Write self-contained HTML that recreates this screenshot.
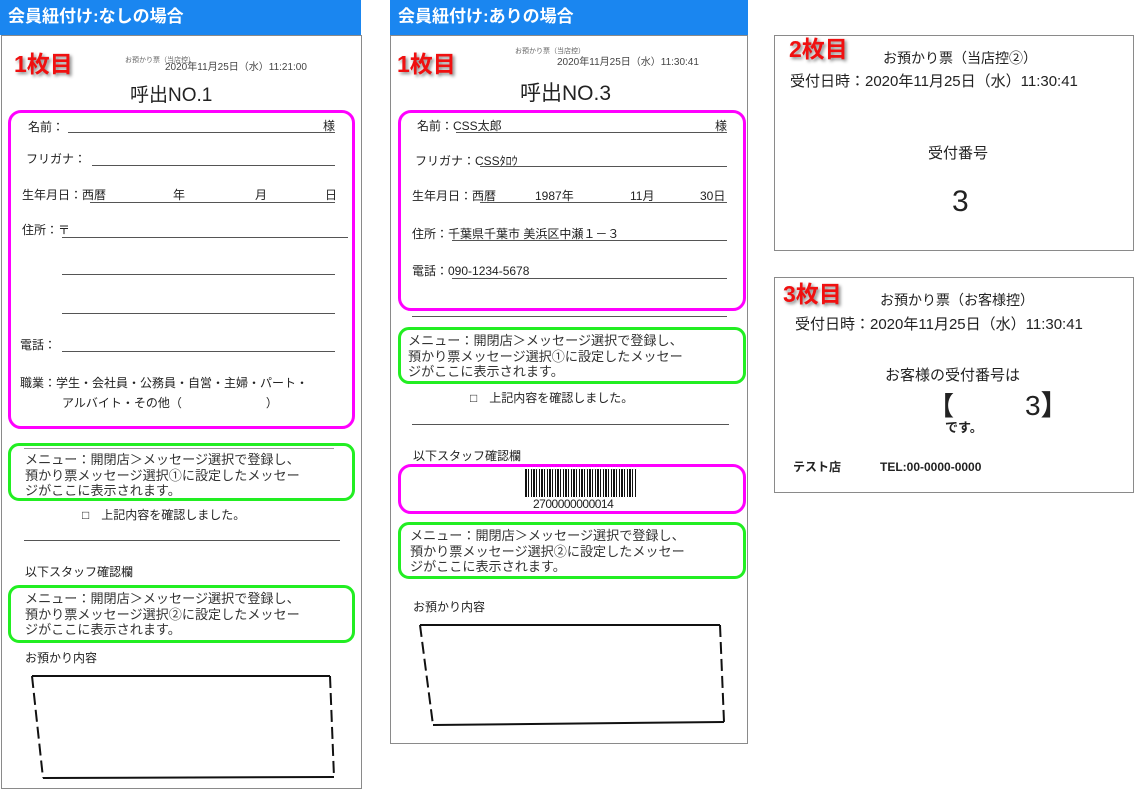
<!DOCTYPE html>
<html><head><meta charset="utf-8"><style>
*{margin:0;padding:0;box-sizing:border-box}
body{width:1134px;height:789px;background:#fff;position:relative;overflow:hidden;font-family:"Liberation Sans","Noto Sans CJK JP",sans-serif;color:#222}
.a{position:absolute;white-space:nowrap;line-height:1}
.hd{position:absolute;top:0;height:35px;background:#1a86f0;color:#fff;font-weight:bold;font-size:17px;padding:8px 0 0 8px;line-height:1}
.pn{position:absolute;border:1px solid #8a8a8a}
.mg{position:absolute;border:3px solid #f0f;border-radius:13px}
.gr{position:absolute;border:3px solid #22ee22;border-radius:11px}
.ln{position:absolute;height:1px;background:#555}
.red{position:absolute;color:#f01010;font-weight:bold;font-size:23px;line-height:1;text-shadow:2px 2px 3px #888,-1px -1px 0 #fff,1px -1px 0 #fff,-1px 1px 0 #fff}
.f12{font-size:12px}
.msg{position:absolute;font-size:13.1px;line-height:15.5px;white-space:nowrap;color:#333}
</style></head><body>

<!-- LEFT -->
<div class="hd" style="left:0;width:361px">会員紐付け:なしの場合</div>
<div class="pn" style="left:1px;top:35px;width:361px;height:754px"></div>
<div class="red" style="left:14px;top:53px">1枚目</div>
<div class="a" style="left:125px;top:57px;font-size:7px;color:#666">お預かり票（当店控）</div>
<div class="a" style="left:165px;top:63px;font-size:10px;color:#444">2020年11月25日（水）11:21:00</div>
<div class="a" style="left:130px;top:86px;font-size:19px">呼出NO.1</div>
<div class="mg" style="left:8px;top:110px;width:347px;height:319px"></div>
<div class="a f12" style="left:28px;top:121px">名前：</div><div class="ln" style="left:68px;top:132px;width:267px"></div><div class="a f12" style="left:323px;top:120px">様</div>
<div class="a f12" style="left:26px;top:153px">フリガナ：</div><div class="ln" style="left:92px;top:165px;width:243px"></div>
<div class="a f12" style="left:22px;top:189px">生年月日：西暦</div><div class="ln" style="left:90px;top:202px;width:245px"></div>
<div class="a f12" style="left:173px;top:189px">年</div><div class="a f12" style="left:255px;top:189px">月</div><div class="a f12" style="left:325px;top:189px">日</div>
<div class="a f12" style="left:22px;top:224px">住所：〒</div><div class="ln" style="left:62px;top:237px;width:286px"></div>
<div class="ln" style="left:62px;top:274px;width:273px"></div>
<div class="ln" style="left:62px;top:313px;width:273px"></div>
<div class="a f12" style="left:20px;top:339px">電話：</div><div class="ln" style="left:62px;top:351px;width:273px"></div>
<div class="a f12" style="left:20px;top:377px">職業：学生・会社員・公務員・自営・主婦・パート・</div>
<div class="a f12" style="left:62px;top:397px">アルバイト・その他（&#12288;&#12288;&#12288;&#12288;&#12288;&#12288;&#12288;）</div>
<div class="gr" style="left:8px;top:443px;width:347px;height:58px"></div>
<div class="ln" style="left:24px;top:448px;width:310px;background:#999"></div>
<div class="msg" style="left:25px;top:452px">メニュー：開閉店＞メッセージ選択で登録し、<br>預かり票メッセージ選択①に設定したメッセー<br>ジがここに表示されます。</div>
<div class="a f12" style="left:82px;top:509px">□&#12288;上記内容を確認しました。</div>
<div class="ln" style="left:24px;top:540px;width:316px"></div>
<div class="a f12" style="left:25px;top:566px">以下スタッフ確認欄</div>
<div class="gr" style="left:8px;top:585px;width:347px;height:58px"></div>
<div class="msg" style="left:25px;top:591px">メニュー：開閉店＞メッセージ選択で登録し、<br>預かり票メッセージ選択②に設定したメッセー<br>ジがここに表示されます。</div>
<div class="a f12" style="left:25px;top:652px">お預かり内容</div>
<svg class="a" style="left:0;top:0" width="1134" height="789" fill="none" stroke="#111" stroke-width="2">
<line x1="32" y1="676" x2="330" y2="676"/><line x1="43" y1="778" x2="334" y2="777"/>
<line x1="32" y1="676" x2="43" y2="778" stroke-dasharray="12,5"/><line x1="330" y1="676" x2="334" y2="777" stroke-dasharray="12,5"/>
<line x1="420" y1="625" x2="720" y2="625"/><line x1="433" y1="725" x2="724" y2="722"/>
<line x1="420" y1="625" x2="433" y2="725" stroke-dasharray="12,5"/><line x1="720" y1="625" x2="724" y2="722" stroke-dasharray="12,5"/>
</svg>

<!-- MIDDLE -->
<div class="hd" style="left:390px;width:358px">会員紐付け:ありの場合</div>
<div class="pn" style="left:390px;top:35px;width:358px;height:709px"></div>
<div class="red" style="left:397px;top:53px">1枚目</div>
<div class="a" style="left:515px;top:48px;font-size:7px;color:#666">お預かり票（当店控）</div>
<div class="a" style="left:557px;top:58px;font-size:10px;color:#444">2020年11月25日（水）11:30:41</div>
<div class="a" style="left:520px;top:83px;font-size:21px">呼出NO.3</div>
<div class="mg" style="left:398px;top:110px;width:348px;height:201px"></div>
<div class="a f12" style="left:417px;top:120px">名前：CSS太郎</div><div class="ln" style="left:456px;top:132px;width:271px"></div><div class="a f12" style="left:715px;top:120px">様</div>
<div class="a f12" style="left:415px;top:155px">フリガナ：CSSﾀﾛｳ</div><div class="ln" style="left:480px;top:166px;width:247px"></div>
<div class="a f12" style="left:412px;top:190px">生年月日：西暦</div><div class="ln" style="left:480px;top:202px;width:247px"></div>
<div class="a f12" style="left:535px;top:190px">1987年</div><div class="a f12" style="left:630px;top:190px">11月</div><div class="a f12" style="left:700px;top:190px">30日</div>
<div class="a f12" style="left:412px;top:228px">住所：千葉県千葉市 美浜区中瀬１－３</div><div class="ln" style="left:452px;top:240px;width:275px"></div>
<div class="a f12" style="left:412px;top:265px">電話：090-1234-5678</div><div class="ln" style="left:452px;top:278px;width:275px"></div>
<div class="ln" style="left:412px;top:316px;width:315px"></div>
<div class="gr" style="left:398px;top:327px;width:348px;height:57px"></div>
<div class="msg" style="left:408px;top:333px">メニュー：開閉店＞メッセージ選択で登録し、<br>預かり票メッセージ選択①に設定したメッセー<br>ジがここに表示されます。</div>
<div class="a f12" style="left:470px;top:392px">□&#12288;上記内容を確認しました。</div>
<div class="ln" style="left:412px;top:424px;width:317px"></div>
<div class="a f12" style="left:413px;top:450px">以下スタッフ確認欄</div>
<div class="mg" style="left:398px;top:464px;width:348px;height:50px"></div>
<div class="a" style="left:525px;top:469px;width:111px;height:28px;background:repeating-linear-gradient(90deg,#111 0 2px,#fff 2px 3px,#111 3px 4px,#fff 4px 6px,#111 6px 7px,#fff 7px 8px)"></div>
<div class="a" style="left:533px;top:498px;font-size:12px;letter-spacing:-0.5px">2700000000014</div>
<div class="gr" style="left:398px;top:522px;width:348px;height:57px"></div>
<div class="msg" style="left:410px;top:528px">メニュー：開閉店＞メッセージ選択で登録し、<br>預かり票メッセージ選択②に設定したメッセー<br>ジがここに表示されます。</div>
<div class="a f12" style="left:413px;top:601px">お預かり内容</div>

<!-- RIGHT -->
<div class="pn" style="left:774px;top:35px;width:360px;height:216px"></div>
<div class="red" style="left:789px;top:38px">2枚目</div>
<div class="a" style="left:883px;top:51px;font-size:14px">お預かり票（当店控②）</div>
<div class="a" style="left:790px;top:74px;font-size:15px">受付日時：2020年11月25日（水）11:30:41</div>
<div class="a" style="left:928px;top:146px;font-size:15px">受付番号</div>
<div class="a" style="left:952px;top:187px;font-size:30px">3</div>

<div class="pn" style="left:774px;top:277px;width:360px;height:216px"></div>
<div class="red" style="left:783px;top:283px">3枚目</div>
<div class="a" style="left:880px;top:293px;font-size:14px">お預かり票（お客様控）</div>
<div class="a" style="left:795px;top:317px;font-size:15px">受付日時：2020年11月25日（水）11:30:41</div>
<div class="a" style="left:885px;top:368px;font-size:15px">お客様の受付番号は</div>
<div class="a" style="left:928px;top:393px;font-size:26px;font-weight:bold">【</div>
<div class="a" style="left:1025px;top:392px;font-size:28px">3<b>】</b></div>
<div class="a" style="left:945px;top:421px;font-size:13px;font-weight:bold">です。</div>
<div class="a" style="left:793px;top:461px;font-size:12px;font-weight:bold">テスト店</div>
<div class="a" style="left:880px;top:461px;font-size:12px;font-weight:bold">TEL:00-0000-0000</div>
</body></html>
